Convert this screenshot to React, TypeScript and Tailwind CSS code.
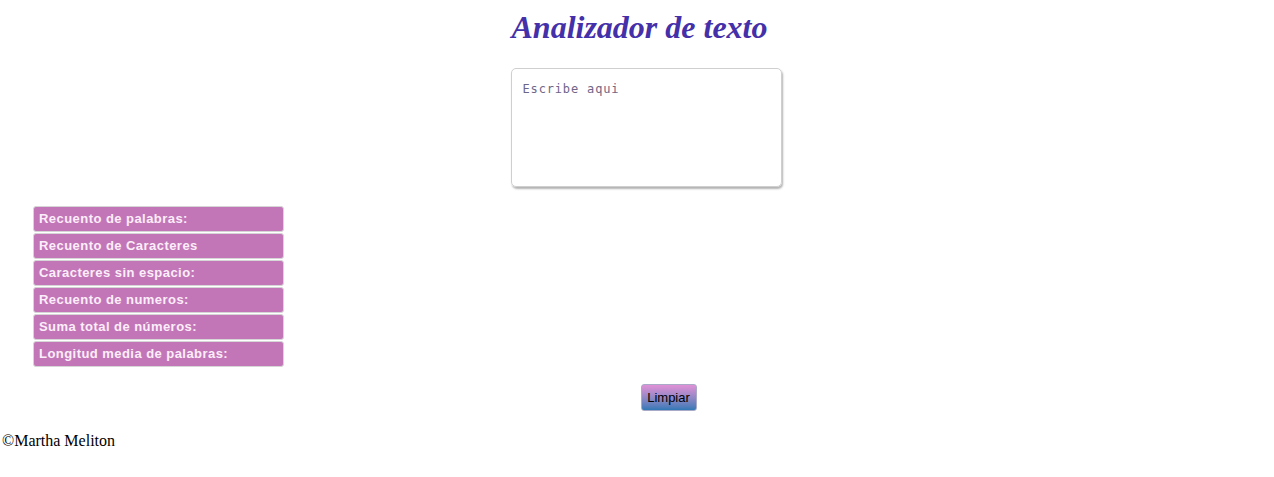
const STATS = [
  "Recuento de palabras:",
  "Recuento de Caracteres",
  "Caracteres sin espacio:",
  "Recuento de numeros:",
  "Suma total de números:",
  "Longitud media de palabras:",
];

export default function App() {
  return (
    <div className="min-h-[477px] bg-white font-['Liberation_Serif',serif] text-black">
      <h1 className="pt-[7px] pl-[5px] text-center text-[32px] font-bold italic leading-[40px] text-[#4430a8]">
        Analizador de texto
      </h1>

      <div className="mt-[21px] flex justify-center pl-[18px]">
        <textarea
          placeholder="Escribe aqui"
          className="h-[119px] w-[271px] resize-none rounded-[5px] border border-[#cfcfcf] px-[11px] pt-[11px] font-['DejaVu_Sans_Mono',monospace] text-[12px] tracking-[0.85px] shadow-[1px_2px_2px_rgba(0,0,0,0.3)] outline-none placeholder:text-[#6e6688]"
        />
      </div>

      <ul className="mt-[19px] ml-[33px] flex w-[251px] flex-col gap-[1px]">
        {STATS.map((s) => (
          <li
            key={s}
            className="flex h-[26px] items-center rounded-[3px] border border-[#d6d6d6] bg-[#c376b7] px-[5px] font-['Liberation_Sans',sans-serif] text-[13px] font-semibold tracking-[0.45px] text-[#fbeefa]"
          >
            {s}
          </li>
        ))}
      </ul>

      <div className="mt-[17px] flex justify-center pl-[63px]">
        <button
          type="button"
          className="h-[27px] w-[56px] rounded-[3px] border border-[#a9a9c8] bg-gradient-to-b from-[#e190d6] to-[#2f79b6] pt-[1px] font-['Liberation_Sans',sans-serif] text-[13px] text-black"
        >
          Limpiar
        </button>
      </div>

      <footer className="mt-[20px] pl-[2px] text-[16px] leading-[20px]">
        ©Martha Meliton
      </footer>
    </div>
  );
}
